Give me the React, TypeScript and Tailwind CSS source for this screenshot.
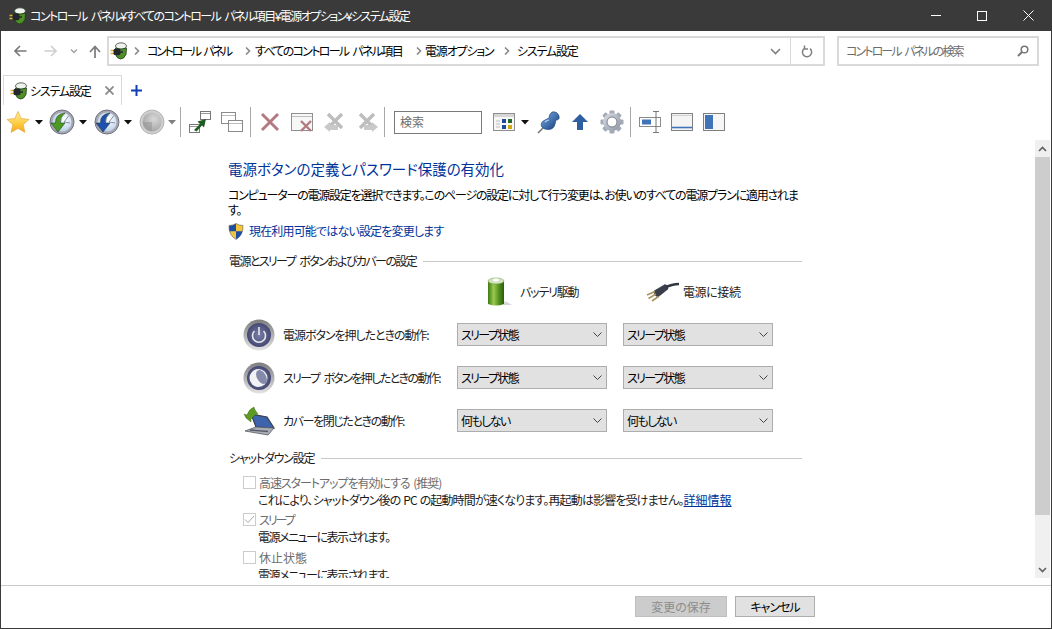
import type { ReactNode } from "react";

const font = "[font-family:'Noto_Sans_CJK_JP','Liberation_Sans',sans-serif] [font-feature-settings:'palt']";

function AppIcon() {
  return (
    <svg width="18" height="18" viewBox="0 0 18 18" className="shrink-0">
      <ellipse cx="11" cy="4" rx="5.5" ry="3.2" fill="#eef1ec" stroke="#3d4a3d" strokeWidth="0.8" />
      <path d="M5.5 6 Q11 8.5 16.5 6 L16 12.5 Q14 17 10.5 17 Q6.5 16.5 5.5 12 Z" fill="#4f8f26" stroke="#1a3a10" strokeWidth="0.8" />
      <path d="M0.5 8.5 H4 M0.5 11.5 H4" stroke="#dcb53a" strokeWidth="1.3" />
      <rect x="3.5" y="6.8" width="7" height="6.4" rx="1.8" fill="#23272c" />
      <path d="M10 10 H13" stroke="#23272c" strokeWidth="1.5" />
    </svg>
  );
}

function Star() {
  return (
    <svg width="24" height="24" viewBox="0 0 24 24">
      <defs>
        <linearGradient id="star" x1="0" y1="0" x2="0" y2="1">
          <stop offset="0" stopColor="#fff3a6" />
          <stop offset="0.6" stopColor="#fcc93c" />
          <stop offset="1" stopColor="#f5a623" />
        </linearGradient>
      </defs>
      <path d="M12 1.5 L15.2 8.6 L23 9.4 L17.2 14.6 L18.9 22.4 L12 18.4 L5.1 22.4 L6.8 14.6 L1 9.4 L8.8 8.6 Z" fill="url(#star)" stroke="#e8b04a" strokeWidth="0.8" />
    </svg>
  );
}

function Orb({ arrow, id, gray }: { arrow: string; id: string; gray?: boolean }) {
  return (
    <svg width="26" height="26" viewBox="0 0 26 26">
      <defs>
        <radialGradient id={id} cx="0.6" cy="0.35" r="0.8">
          <stop offset="0" stopColor={gray ? "#d8d8d8" : "#ffffff"} />
          <stop offset="1" stopColor={gray ? "#9c9c9c" : "#a9c6e6"} />
        </radialGradient>
      </defs>
      <circle cx="13" cy="13" r="12" fill={gray ? "#cfcfcf" : "#a7a7b3"} stroke={gray ? "#b5b5b5" : "#6f7380"} />
      <circle cx="13" cy="13" r="9.5" fill={`url(#${id})`} />
      {gray ? (
        <path d="M13 13 L13 22 A9 9 0 0 1 4 13 Z" fill="#8f8f8f" opacity="0.45" />
      ) : (
        <>
          <path d="M15 13 L20 6.5 M15 13 L21 14" stroke="#7c8598" strokeWidth="0.9" />
          <path d="M16 4 Q6 5 6.5 14 L2 14 L9 23 L16 14 L11.5 14 Q11 8 16 4 Z" fill={arrow} stroke="#16301a" strokeWidth="0.5" />
        </>
      )}
    </svg>
  );
}

function Caret({ light }: { light?: boolean }) {
  return (
    <svg width="8" height="5" viewBox="0 0 8 5">
      <path d="M0 0 H8 L4 4.5 Z" fill={light ? "#808080" : "#111111"} />
    </svg>
  );
}

function TileMove() {
  return (
    <svg width="24" height="24" viewBox="0 0 24 24">
      <rect x="12.5" y="1.5" width="10" height="8" fill="#fff" stroke="#777" />
      <path d="M13 3.5 H22" stroke="#999" />
      <rect x="1.5" y="14.5" width="10" height="8" fill="#fff" stroke="#777" />
      <path d="M2 16.5 H11" stroke="#999" />
      <path d="M6 20 L12 14 L9.5 11.5 L18 9 L16 17.5 L14 15.5 L8.5 21.5 Z" fill="#1f5c24" />
    </svg>
  );
}

function TileCascade() {
  return (
    <svg width="24" height="24" viewBox="0 0 24 24">
      <rect x="1.5" y="2.5" width="14" height="11" fill="#fff" stroke="#8a8a8a" />
      <path d="M2 5.5 H15" stroke="#bbb" />
      <rect x="8.5" y="10.5" width="14" height="11" fill="#fff" stroke="#8a8a8a" />
      <path d="M9 13.5 H22" stroke="#bbb" />
    </svg>
  );
}

function RedX() {
  return (
    <svg width="22" height="22" viewBox="0 0 22 22">
      <path d="M3 3 L19 19 M19 3 L3 19" stroke="#b47a82" strokeWidth="3" />
    </svg>
  );
}

function WinX() {
  return (
    <svg width="24" height="22" viewBox="0 0 24 22">
      <rect x="1.5" y="2.5" width="21" height="17" fill="#f7f7f7" stroke="#8f8f8f" />
      <path d="M2 5.5 H22" stroke="#bdbdbd" />
      <path d="M11 10 L21 20 M21 10 L11 20" stroke="#b47a82" strokeWidth="2.4" />
    </svg>
  );
}

function GrayX({ flip }: { flip?: boolean }) {
  return (
    <svg width="23" height="23" viewBox="0 0 23 23" className={flip ? "-scale-x-100" : ""}>
      <path d="M5 3 L19 17 M19 3 L5 17" stroke="#bdbdbd" strokeWidth="3.4" />
      <path d="M1 16 L7 11 V14 H15 V19 H7 V21 Z" fill="#c9c9c9" />
    </svg>
  );
}

function ViewIcon() {
  return (
    <svg width="24" height="24" viewBox="0 0 24 24">
      <rect x="1.5" y="3.5" width="21" height="17" fill="#f7f7f7" stroke="#8f8f8f" />
      <rect x="2" y="4" width="20" height="3" fill="#d6d6d6" />
      <path d="M4 11 H8 M4 14 H8 M4 17 H8" stroke="#bdbdbd" />
      <rect x="10" y="9" width="4" height="4" fill="#1d4a9c" />
      <rect x="16" y="9" width="4" height="4" fill="#24682b" />
      <rect x="10" y="15" width="4" height="4" fill="#1d4a9c" />
      <rect x="16" y="15" width="4" height="4" fill="#d1a910" />
    </svg>
  );
}

function Pin() {
  return (
    <svg width="23" height="23" viewBox="0 0 23 23">
      <defs>
        <linearGradient id="pin" x1="0" y1="0" x2="1" y2="1">
          <stop offset="0" stopColor="#7fb0e8" />
          <stop offset="1" stopColor="#0f3a78" />
        </linearGradient>
      </defs>
      <path d="M1 22 L8 15" stroke="#777" strokeWidth="1.6" />
      <path d="M15 1 Q20 0 22 5 Q23 9 19 9 L18 13 Q17 18 12 18.5 Q7 19 4.5 15.5 Q3 11 8 9 L12 7 Q12 3 15 1 Z" fill="url(#pin)" stroke="#0f3a78" strokeWidth="0.6" />
      <path d="M8 11 Q10 9 12 9" stroke="#b8d4f4" strokeWidth="1.2" fill="none" />
    </svg>
  );
}

function UpArrow() {
  return (
    <svg width="18" height="18" viewBox="0 0 18 18">
      <path d="M9 1 L17 9 L12 9 L12 17 L6 17 L6 9 L1 9 Z" fill="#2f5f9f" />
    </svg>
  );
}

function Gear() {
  const teeth = [0, 45, 90, 135, 180, 225, 270, 315];
  return (
    <svg width="24" height="24" viewBox="0 0 24 24">
      <defs>
        <linearGradient id="gear" x1="0" y1="0" x2="1" y2="1">
          <stop offset="0" stopColor="#dde1e8" />
          <stop offset="1" stopColor="#8b93a1" />
        </linearGradient>
      </defs>
      {teeth.map((t) => (
        <rect key={t} x="9.5" y="0.5" width="5" height="6" rx="1" fill="#a4abb7" transform={`rotate(${t} 12 12)`} />
      ))}
      <circle cx="12" cy="12" r="9" fill="url(#gear)" />
      <circle cx="12" cy="12" r="5" fill="#fff" stroke="#79818f" />
    </svg>
  );
}

function Resize() {
  return (
    <svg width="22" height="24" viewBox="0 0 22 24">
      <rect x="0.5" y="7.5" width="21" height="9" fill="#fff" stroke="#8a8a8a" />
      <rect x="3" y="9.5" width="9" height="5" fill="#3f74b8" />
      <path d="M14 1.5 H20 M17 1.5 V22.5 M14 22.5 H20" stroke="#777" />
    </svg>
  );
}

function PaneBottom() {
  return (
    <svg width="22" height="18" viewBox="0 0 22 18">
      <rect x="0.5" y="0.5" width="21" height="17" fill="#f4f4f4" stroke="#808080" />
      <path d="M1 14.5 H21" stroke="#3f74b8" strokeWidth="1.6" />
      <path d="M1 2.5 H21" stroke="#cfcfcf" />
    </svg>
  );
}

function PaneLeft() {
  return (
    <svg width="22" height="18" viewBox="0 0 22 18">
      <rect x="0.5" y="0.5" width="21" height="17" fill="#f6f6f6" stroke="#808080" />
      <rect x="2" y="2" width="8" height="14" fill="#3f74b8" />
    </svg>
  );
}

function Shield() {
  return (
    <svg width="16" height="17" viewBox="0 0 16 17">
      <path d="M8 0.5 Q11 2.5 15 2.5 Q15.5 12 8 16.5 Q0.5 12 1 2.5 Q5 2.5 8 0.5 Z" fill="#f2c53d" stroke="#5c5c5c" strokeWidth="0.6" />
      <path d="M8 0.8 Q5 2.6 1.2 2.7 Q1 5.5 1.6 8.2 H8 Z" fill="#1d4fa1" />
      <path d="M8 8.2 H14.4 Q13 13.5 8 16.2 Z" fill="#1d4fa1" />
    </svg>
  );
}

function Battery() {
  return (
    <svg width="26" height="30" viewBox="0 0 26 30">
      <defs>
        <linearGradient id="batt" x1="0" y1="0" x2="1" y2="0">
          <stop offset="0" stopColor="#3d7a12" />
          <stop offset="0.35" stopColor="#9ac94f" />
          <stop offset="0.7" stopColor="#4f8f1c" />
          <stop offset="1" stopColor="#2b5c0c" />
        </linearGradient>
      </defs>
      <path d="M16 28 H25 L18 24 Z" fill="#d6d6d6" />
      <path d="M1 4 H17 V27 Q9 30 1 27 Z" fill="url(#batt)" />
      <ellipse cx="9" cy="4" rx="8" ry="3" fill="#d5e3c4" stroke="#6b9440" strokeWidth="0.5" />
      <ellipse cx="9" cy="3" rx="3" ry="1.4" fill="#ffffff" />
    </svg>
  );
}

function Plug() {
  return (
    <svg width="34" height="20" viewBox="0 0 34 20">
      <path d="M18 6 Q26 2 33 2" stroke="#33363e" strokeWidth="2.4" fill="none" />
      <path d="M8 9 L19 2.5 Q22 3 22 7 L12 15 Q8 14 8 9 Z" fill="#3a3e4b" stroke="#22242b" strokeWidth="0.5" />
      <path d="M1 13 L9 9.5 M2.5 16.5 L10 12 M6 19 L12.5 14.5" stroke="#a8945c" strokeWidth="1.6" />
    </svg>
  );
}

function PowerBtn({ moon }: { moon?: boolean }) {
  const id = moon ? "ring2" : "ring1";
  return (
    <svg width="32" height="32" viewBox="0 0 32 32">
      <defs>
        <linearGradient id={id} x1="0" y1="0" x2="0" y2="1">
          <stop offset="0" stopColor="#7d7d7d" />
          <stop offset="1" stopColor="#e4e4e4" />
        </linearGradient>
        <radialGradient id={`${id}c`} cx="0.5" cy="0.5" r="0.6">
          <stop offset="0" stopColor="#7a7ea6" />
          <stop offset="1" stopColor="#3b3e68" />
        </radialGradient>
      </defs>
      <circle cx="16" cy="16" r="15.5" fill={`url(#${id})`} />
      <circle cx="16" cy="16" r="12" fill={`url(#${id}c)`} />
      {moon ? (
        <>
          <circle cx="15.5" cy="16" r="9" fill="#f1f2f6" />
          <ellipse cx="18.5" cy="15" rx="4.5" ry="7.5" transform="rotate(-30 18.5 15)" fill="#8589aa" />
        </>
      ) : (
        <>
          <path d="M11.5 12 A6.5 6.5 0 1 0 20.5 12" stroke="#e8e9f0" strokeWidth="1.6" fill="none" />
          <path d="M16 8 V16" stroke="#e8e9f0" strokeWidth="1.6" />
        </>
      )}
    </svg>
  );
}

function LidIcon() {
  return (
    <svg width="32" height="30" viewBox="0 0 32 30">
      <path d="M8 8 L24 11 L31 22 L13 21 Z" fill="#3d64ad" stroke="#3a3d48" strokeWidth="1.2" />
      <path d="M13 21 L31 22 L25 29 L2 25 Z" fill="#a9adb5" stroke="#555a66" strokeWidth="0.8" />
      <path d="M7 24 L25 25.5" stroke="#555a66" strokeWidth="1.4" />
      <path d="M3 12 L8 16 L8 13 Q12 8 15 8 Q11 3 11 1 Q6 3 4 9 L1 8 Z" fill="#5c9a22" stroke="#335d10" strokeWidth="0.4" />
    </svg>
  );
}

function Chevron({ className = "" }: { className?: string }) {
  return (
    <svg width="6" height="8" viewBox="0 0 6 8" className={className}>
      <path d="M1 0.5 L4.5 4 L1 7.5" stroke="#8a8a8a" strokeWidth="1.6" fill="none" />
    </svg>
  );
}

function Select({ value }: { value: string }) {
  return (
    <div className="w-[150px] h-[23px] bg-[#e1e1e1] border border-[#adadad] flex items-center justify-between pl-[3px] pr-[4px] text-[12px] tracking-[-1.6px] text-black">
      <span>{value}</span>
      <svg width="9" height="5" viewBox="0 0 9 5">
        <path d="M0.5 0.5 L4.5 4.5 L8.5 0.5" stroke="#444" fill="none" />
      </svg>
    </div>
  );
}

function Section({ title, tracking }: { title: string; tracking: string }) {
  return (
    <div className="flex items-center gap-[7px] h-[18px] w-[574px] pl-[1px] text-[12px] text-[#1a1a1a]">
      <span className={`whitespace-nowrap ${tracking}`}>{title}</span>
      <div className="flex-1 h-px bg-[#c8c8c8]" />
    </div>
  );
}

function Check({ checked }: { checked?: boolean }) {
  return (
    <div className="w-[13px] h-[13px] border border-[#cccccc] bg-white flex items-center justify-center">
      {checked && (
        <svg width="11" height="9" viewBox="0 0 11 9">
          <path d="M1 4.5 L4 7.5 L10 1" stroke="#a8a8a8" fill="none" />
        </svg>
      )}
    </div>
  );
}

function ShutdownItem({ label, tracking, checked, children }: { label: string; tracking: string; checked?: boolean; children: ReactNode }) {
  return (
    <div className="flex flex-col">
      <div className="flex items-center gap-[3px] h-[17px]">
        <Check checked={checked} />
        <span className={`text-[#6d6d6d] ${tracking}`}>{label}</span>
      </div>
      <div className="pl-[15px] h-[20px] leading-[17px] text-[#1a1a1a] whitespace-nowrap">{children}</div>
    </div>
  );
}

const actions = [
  { label: "電源ボタンを押したときの動作:", icon: <PowerBtn />, value: "スリープ状態", tracking: "tracking-[-1.05px]" },
  { label: "スリープ ボタンを押したときの動作:", icon: <PowerBtn moon />, value: "スリープ状態", tracking: "tracking-[-1.6px] [word-spacing:3px]" },
  { label: "カバーを閉じたときの動作:", icon: <LidIcon />, value: "何もしない", tracking: "tracking-[-1.4px]" },
];

export default function App() {
  return (
    <div className={`${font} w-[1052px] h-[629px] flex flex-col bg-white border-x border-b border-[#3a3a3a] overflow-hidden`}>
      {/* title bar */}
      <div className="h-[31px] shrink-0 bg-[#3a3a3a] flex items-center text-white text-[12px]">
        <div className="pl-[8px] pr-[3px]"><AppIcon /></div>
        <span className="whitespace-nowrap tracking-[-1.55px] [word-spacing:3px]">コントロール パネル¥すべてのコントロール パネル項目¥電源オプション¥システム設定</span>
        <div className="ml-auto flex">
          <div className="w-[46px] h-[31px] flex items-center justify-center">
            <div className="w-[10px] h-px bg-white" />
          </div>
          <div className="w-[46px] h-[31px] flex items-center justify-center">
            <div className="w-[10px] h-[10px] border border-white" />
          </div>
          <div className="w-[46px] h-[31px] flex items-center justify-center">
            <svg width="11" height="11" viewBox="0 0 11 11"><path d="M0.5 0.5 L10.5 10.5 M10.5 0.5 L0.5 10.5" stroke="#fff" /></svg>
          </div>
        </div>
      </div>

      {/* nav row */}
      <div className="h-[35px] shrink-0 flex items-center pt-[5px] text-[12px]">
        <div className="w-[106px] flex items-center pl-[13px]">
          <svg width="13" height="12" viewBox="0 0 13 12"><path d="M12.5 6 H1.5 M6 1 L1 6 L6 11" stroke="#7a7a7a" strokeWidth="1.6" fill="none" /></svg>
          <svg width="13" height="12" viewBox="0 0 13 12" className="ml-[17px]"><path d="M0.5 6 H11.5 M7 1 L12 6 L7 11" stroke="#cfcfcf" strokeWidth="1.6" fill="none" /></svg>
          <svg width="8" height="5" viewBox="0 0 8 5" className="ml-[13px]"><path d="M1 0.5 L4 3.5 L7 0.5" stroke="#a0a0a0" strokeWidth="1.4" fill="none" /></svg>
          <svg width="12" height="13" viewBox="0 0 12 13" className="ml-[11px]"><path d="M6 13 V2 M1 7 L6 1.5 L11 7" stroke="#7a7a7a" strokeWidth="1.7" fill="none" /></svg>
        </div>
        <div className="w-[718px] h-[30px] border-2 border-[#d9d9d9] flex items-center">
          <div className="pl-[1px]"><AppIcon /></div>
          <Chevron className="ml-[6px]" />
          <span className="ml-[7px] w-[98px] whitespace-nowrap tracking-[-2.2px] [word-spacing:3px]">コントロール パネル</span>
          <Chevron />
          <span className="ml-[4px] w-[161px] whitespace-nowrap tracking-[-1.7px] [word-spacing:3px]">すべてのコントロール パネル項目</span>
          <Chevron />
          <span className="ml-[3px] w-[79px] whitespace-nowrap tracking-[-1.2px]">電源オプション</span>
          <Chevron />
          <span className="ml-[7px] whitespace-nowrap tracking-[-1.2px]">システム設定</span>
          <svg width="11" height="7" viewBox="0 0 11 7" className="ml-auto mr-[9px]"><path d="M1 1 L5.5 5.5 L10 1" stroke="#7f7f7f" strokeWidth="1.6" fill="none" /></svg>
          <div className="w-[33px] h-full border-l border-[#d9d9d9] flex items-center justify-center">
            <svg width="12" height="13" viewBox="0 0 12 13"><path d="M4 3 A4.6 4.6 0 1 0 9 3.6 M3.5 0.5 V4 H7" stroke="#808080" strokeWidth="1.5" fill="none" /></svg>
          </div>
        </div>
        <div className="ml-[12px] w-[202px] h-[30px] border-2 border-[#d9d9d9] flex items-center justify-between pl-[7px] pr-[8px] text-[#6d6d6d]">
          <span className="whitespace-nowrap tracking-[-1.9px] [word-spacing:3px]">コントロール パネルの検索</span>
          <svg width="12" height="12" viewBox="0 0 12 12"><circle cx="7.5" cy="4.5" r="3.3" stroke="#777" strokeWidth="1.5" fill="none" /><path d="M5 7 L1 11" stroke="#777" strokeWidth="2" /></svg>
        </div>
      </div>

      {/* tab row */}
      <div className="h-[39px] shrink-0 flex items-end pl-[2px] text-[12px]">
        <div className="w-[119px] h-[30px] border-x border-t border-[#d9d9d9] flex items-center pl-[6px] pr-[7px]">
          <AppIcon />
          <span className="ml-[2px] whitespace-nowrap text-black tracking-[-1.2px]">システム設定</span>
          <svg width="9" height="9" viewBox="0 0 9 9" className="ml-auto"><path d="M0.5 0.5 L8.5 8.5 M8.5 0.5 L0.5 8.5" stroke="#8a8a8a" strokeWidth="1.8" /></svg>
        </div>
        <svg width="11" height="11" viewBox="0 0 11 11" className="ml-[9px] mb-[9px]"><path d="M5.5 0 V11 M0 5.5 H11" stroke="#0f3fb5" strokeWidth="2" /></svg>
      </div>

      {/* toolbar */}
      <div className="h-[34px] shrink-0 flex items-center pl-[5px]">
        <Star />
        <div className="ml-[5px]"><Caret /></div>
        <div className="ml-[6px]"><Orb id="orb1" arrow="#4d9a22" /></div>
        <div className="ml-[4px]"><Caret /></div>
        <div className="ml-[7px]"><Orb id="orb2" arrow="#1f4fb0" /></div>
        <div className="ml-[4px]"><Caret /></div>
        <div className="ml-[7px]"><Orb id="orb3" arrow="#aaa" gray /></div>
        <div className="ml-[3px]"><Caret light /></div>
        <div className="ml-[4px] w-px h-[30px] bg-[#a8a8a8]" />
        <div className="ml-[7px]"><TileMove /></div>
        <div className="ml-[8px]"><TileCascade /></div>
        <div className="ml-[6px] w-px h-[30px] bg-[#a8a8a8]" />
        <div className="ml-[8px]"><RedX /></div>
        <div className="ml-[9px]"><WinX /></div>
        <div className="ml-[9px]"><GrayX /></div>
        <div className="ml-[10px]"><GrayX flip /></div>
        <div className="ml-[5px] w-px h-[30px] bg-[#a8a8a8]" />
        <div className="ml-[9px] w-[88px] h-[23px] border border-[#7a7a7a] flex items-center pl-[5px] text-[12px] text-[#6d6d6d]">検索</div>
        <div className="ml-[10px]"><ViewIcon /></div>
        <div className="ml-[5px]"><Caret /></div>
        <div className="ml-[8px]"><Pin /></div>
        <div className="ml-[11px]"><UpArrow /></div>
        <div className="ml-[11px]"><Gear /></div>
        <div className="ml-[6px] w-px h-[30px] bg-[#a8a8a8]" />
        <div className="ml-[8px]"><Resize /></div>
        <div className="ml-[10px]"><PaneBottom /></div>
        <div className="ml-[10px]"><PaneLeft /></div>
      </div>

      {/* content + scrollbar */}
      <div className="h-[439px] shrink-0 flex overflow-hidden">
        <div className="flex-1 overflow-hidden pl-[227px] pt-[19px] text-[12px] text-[#1a1a1a]">
          <h1 className="text-[14.5px] leading-[22px] text-[#003399] font-normal whitespace-nowrap">電源ボタンの定義とパスワード保護の有効化</h1>
          <p className="mt-[7px] w-[574px] leading-[15px] text-black tracking-[-1.2px]">
            コンピューターの電源設定を選択できます。このページの設定に対して行う変更は、お使いのすべての電源プランに適用されま
            <br />
            す。
          </p>
          <div className="mt-[5px] h-[18px] flex items-center gap-[5px] text-[#003399] tracking-[-0.83px]">
            <Shield />
            <span>現在利用可能ではない設定を変更します</span>
          </div>
          <div className="mt-[12px]">
            <Section title="電源とスリープ ボタンおよびカバーの設定" tracking="tracking-[-1.6px] [word-spacing:3px]" />
          </div>
          <div className="mt-[3px] h-[38px] flex items-center pl-[259px]">
            <div className="w-[159px] flex items-center gap-[7px]">
              <Battery />
              <span className="text-[#222] tracking-[-1.2px]">バッテリ駆動</span>
            </div>
            <div className="flex items-center gap-[3px]">
              <Plug />
              <span className="text-[#222] tracking-[-0.4px]">電源に接続</span>
            </div>
          </div>
          <div className="mt-[12px] flex flex-col gap-[20px]">
            {actions.map((a) => (
              <div key={a.label} className="flex items-center h-[23px] pl-[15px]">
                <div className="w-[40px] flex items-center">{a.icon}</div>
                <span className={`w-[174px] whitespace-nowrap text-[#222] ${a.tracking}`}>{a.label}</span>
                <Select value={a.value} />
                <div className="ml-[16px]"><Select value={a.value} /></div>
              </div>
            ))}
          </div>
          <div className="mt-[17px]">
            <Section title="シャットダウン設定" tracking="tracking-[-1.2px]" />
          </div>
          <div className="mt-[7px] pl-[15px]">
            <ShutdownItem label="高速スタートアップを有効にする (推奨)" tracking="tracking-[-1.05px] [word-spacing:2px]">
              <span className="tracking-[-0.86px] [word-spacing:1px]">これにより、シャットダウン後の PC の起動時間が速くなります。再起動は影響を受けません。</span>
              <span className="text-[#003399] underline">詳細情報</span>
            </ShutdownItem>
            <ShutdownItem label="スリープ" tracking="tracking-[-2px]" checked>
              <span className="tracking-[-1.5px]">電源メニューに表示されます。</span>
            </ShutdownItem>
            <div className="mt-[1px]">
              <ShutdownItem label="休止状態" tracking="tracking-normal">
                <span className="tracking-[-1.5px]">電源メニューに表示されます。</span>
              </ShutdownItem>
            </div>
          </div>
        </div>
        <div className="w-[15px] mr-[1px] shrink-0 mt-[1px] bg-[#f0f0f0] flex flex-col">
          <div className="h-[17px] flex items-center justify-center">
            <svg width="9" height="6" viewBox="0 0 9 6"><path d="M1 5 L4.5 1.5 L8 5" stroke="#606060" strokeWidth="1.6" fill="none" /></svg>
          </div>
          <div className="h-[358px] bg-[#cdcdcd]" />
          <div className="mt-auto h-[17px] flex items-center justify-center">
            <svg width="9" height="6" viewBox="0 0 9 6"><path d="M1 1 L4.5 4.5 L8 1" stroke="#606060" strokeWidth="1.6" fill="none" /></svg>
          </div>
        </div>
      </div>

      {/* footer */}
      <div className="mt-[7px] flex-1 border-t border-[#c8c8c8] flex justify-end items-start gap-[8px] pt-[10px] pr-[236px] text-[12px]">
        <div className="w-[92px] h-[21px] bg-[#cccccc] border border-[#bfbfbf] flex items-center justify-center text-[#8c8c8c]">変更の保存</div>
        <div className="w-[80px] h-[21px] bg-[#e1e1e1] border border-[#adadad] flex items-center justify-center text-black tracking-[-1px]">キャンセル</div>
      </div>
    </div>
  );
}
